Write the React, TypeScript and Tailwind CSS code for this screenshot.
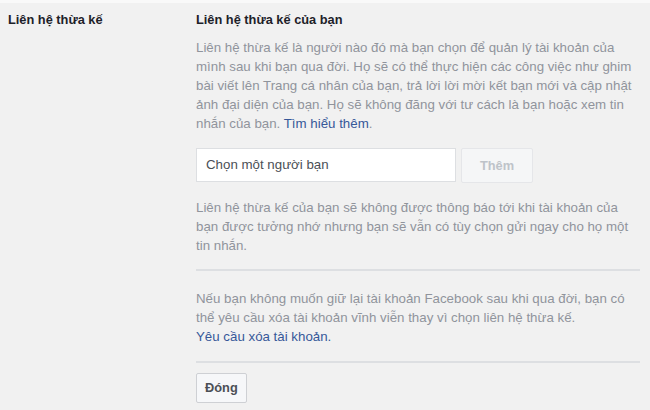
import React from "react";

export default function App() {
  return (
    <div
      className="w-[650px] h-[410px] overflow-hidden bg-[#f1f1f1] border-t-[3px] border-[#f9f9f9] text-[#1d2129]"
      style={{ fontFamily: '"Liberation Sans", Arial, sans-serif' }}
    >
      <div className="flex">
        <div className="w-[196px] shrink-0 pl-[8px] pt-[8px] text-[12.8px] font-bold leading-[18px]">
          Liên hệ thừa kế
        </div>
        <div className="w-[444px] pt-[8px]">
          <div className="text-[12.8px] font-bold leading-[18px]">
            Liên hệ thừa kế của bạn
          </div>
          <p className="mt-[9px] text-[13.3px] leading-[19px] text-[#90949c] whitespace-nowrap">
            Liên hệ thừa kế là người nào đó mà bạn chọn để quản lý tài khoản của
            <br />
            mình sau khi bạn qua đời. Họ sẽ có thể thực hiện các công việc như ghim
            <br />
            bài viết lên Trang cá nhân của bạn, trả lời lời mời kết bạn mới và cập nhật
            <br />
            ảnh đại diện của bạn. Họ sẽ không đăng với tư cách là bạn hoặc xem tin
            <br />
            nhắn của bạn. <span className="text-[#365899]">Tìm hiểu thêm</span>.
          </p>
          <div className="mt-[15px] flex gap-[5px]">
            <div className="w-[260px] h-[34px] bg-white border border-[#dddfe2] flex items-center px-[9px] text-[13.3px] text-[#4b4f56]">
              Chọn một người bạn
            </div>
            <div className="w-[72px] h-[35px] bg-[#f5f6f7] border border-[#e5e6e9] rounded-[2px] flex items-center justify-center text-[12.8px] font-bold text-[#bec3c9]">
              Thêm
            </div>
          </div>
          <p className="mt-[15px] text-[13.3px] leading-[19px] text-[#90949c] whitespace-nowrap">
            Liên hệ thừa kế của bạn sẽ không được thông báo tới khi tài khoản của
            <br />
            bạn được tưởng nhớ nhưng bạn sẽ vẫn có tùy chọn gửi ngay cho họ một
            <br />
            tin nhắn.
          </p>
          <div className="mt-[14px] h-[2px] bg-[#dddfe2]" />
          <p className="mt-[18px] text-[13.3px] leading-[19px] text-[#90949c] whitespace-nowrap">
            Nếu bạn không muốn giữ lại tài khoản Facebook sau khi qua đời, bạn có
            <br />
            thể yêu cầu xóa tài khoản vĩnh viễn thay vì chọn liên hệ thừa kế.
            <br />
            <span className="text-[#365899]">Yêu cầu xóa tài khoản.</span>
          </p>
          <div className="mt-[15px] h-[2px] bg-[#dddfe2]" />
          <div className="mt-[10px] inline-flex h-[30px] px-[8px] items-center bg-[#f6f7f9] border border-[#ced0d4] rounded-[2px] text-[12.8px] font-bold text-[#4b4f56]">
            Đóng
          </div>
        </div>
      </div>
    </div>
  );
}
